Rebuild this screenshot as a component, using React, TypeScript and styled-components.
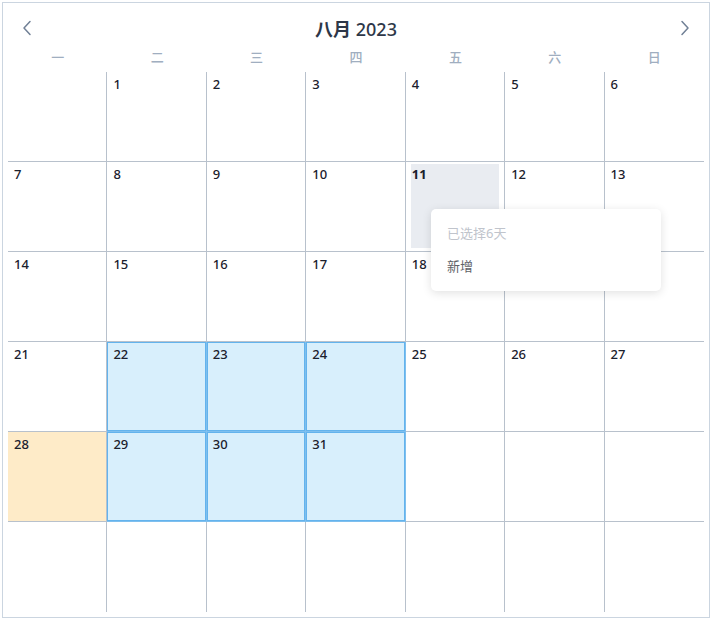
import React from "react";
import styled, { createGlobalStyle, css } from "styled-components";

const GlobalStyle = createGlobalStyle`
  body {
    margin: 0;
    font-family: "Noto Sans", "Noto Sans CJK SC", sans-serif;
    background: #fff;
  }
`

const Frame = styled.div`
  position: relative;
  box-sizing: border-box;
  margin: 2px;
  width: 708px;
  height: 616px;
  padding: 0 5px 5px;
  border: 1px solid #cbd5e0;
  display: flex;
  flex-direction: column;
`

const Header = styled.div`
  display: flex;
  align-items: center;
  justify-content: space-between;
  height: 34px;
  padding: 8px 9px 0;
`

const NavButton = styled.button`
  width: 20px;
  height: 20px;
  padding: 0;
  border: 0;
  background: none;
  display: flex;
  align-items: center;
  justify-content: center;
  color: #718096;
  cursor: pointer;
`

const Title = styled.div`
  font-size: 18px;
  color: #2d3748;
  font-weight: 500;

  b {
    font-weight: 700;
  }
`

const WeekRow = styled.div`
  display: grid;
  grid-template-columns: repeat(7, 1fr);
  height: 27px;
`

const WeekDay = styled.div`
  text-align: center;
  font-size: 13px;
  line-height: 24px;
  font-weight: 500;
  color: #a0aec0;
`

const Grid = styled.div`
  display: grid;
  grid-template-columns: repeat(7, 1fr);
  grid-template-rows: repeat(6, 90px);
`

type CellProps = { $row: number; $col: number; $kind?: "today" | "selected" | "weekend" };

const Cell = styled.div<CellProps>`
  box-sizing: border-box;
  padding: 2px 5px 3px 5px;
  border-bottom: ${(p) => (p.$row < 5 ? "1px solid #b8c1cc" : "0")};
  border-right: ${(p) => (p.$col < 6 ? "1px solid #b8c1cc" : "0")};
  font-size: 13px;
  font-weight: 500;
  color: #1a202c;

  ${(p) =>
    p.$kind === "today" &&
    css`
      background: #e9ecf1;
      background-clip: content-box;
      font-weight: 700;
    `}
  ${(p) =>
    p.$kind === "selected" &&
    css`
      background: #d8effc;
      border-color: #7fbfee;
      box-shadow: inset 0 0 0 1px #63b3ed;
    `}
  ${(p) =>
    p.$kind === "weekend" &&
    css`
      background: #feebc8;
    `}
`

const DayNumber = styled.div`
  padding: 1px 1px 0;
  line-height: 18px;
`

const Menu = styled.div`
  position: absolute;
  left: 428px;
  top: 206px;
  width: 230px;
  box-sizing: border-box;
  padding: 8px 0;
  background: #fff;
  border-radius: 5px;
  box-shadow: 0 2px 10px rgba(0, 0, 0, 0.12);
`

const MenuItem = styled.div<{ $muted?: boolean }>`
  padding: 0 16px;
  height: 33px;
  line-height: 32px;
  font-size: 13px;
  color: ${(p) => (p.$muted ? "#c0c4cc" : "#606266")};
`

const Chevron: React.FC<{ dir: "left" | "right" }> = ({ dir }) => (
  <svg width="10" height="16" viewBox="0 0 10 16" fill="none">
    <polyline
      points={dir === "left" ? "8,1.5 2,8 8,14.5" : "2,1.5 8,8 2,14.5"}
      stroke="currentColor"
      strokeWidth="1.5"
      strokeLinecap="round"
      strokeLinejoin="round"
    />
  </svg>
);

const weekDays = ["一", "二", "三", "四", "五", "六", "日"];
const selected = [22, 23, 24, 29, 30, 31];

const App: React.FC = () => {
  // 2023年8月1日是周二，周一为每周第一天
  const cells: (number | null)[] = [];
  for (let i = 0; i < 42; i++) {
    const day = i;
    cells.push(day >= 1 && day <= 31 ? day : null);
  }

  const kindOf = (day: number | null) => {
    if (day === 11) return "today";
    if (day === 28) return "weekend";
    if (day && selected.includes(day)) return "selected";
    return undefined;
  };

  return (
    <>
      <GlobalStyle />
      <Frame>
        <Header>
          <NavButton><Chevron dir="left" /></NavButton>
          <Title><b>八月</b> 2023</Title>
          <NavButton><Chevron dir="right" /></NavButton>
        </Header>
        <WeekRow>
          {weekDays.map((d) => (
            <WeekDay key={d}>{d}</WeekDay>
          ))}
        </WeekRow>
        <Grid>
          {cells.map((day, i) => (
            <Cell key={i} $row={Math.floor(i / 7)} $col={i % 7} $kind={kindOf(day)}>
              {day && <DayNumber>{day}</DayNumber>}
            </Cell>
          ))}
        </Grid>
        <Menu>
          <MenuItem $muted>已选择6天</MenuItem>
          <MenuItem>新增</MenuItem>
        </Menu>
      </Frame>
    </>
  );
};

export default App;
